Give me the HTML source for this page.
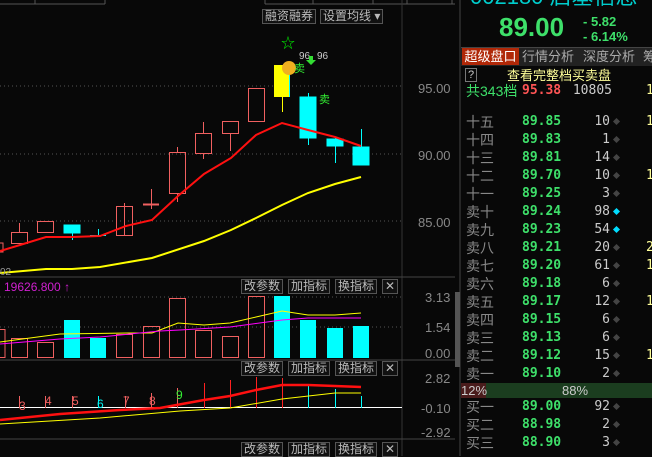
<!DOCTYPE html><html><head><meta charset="utf-8"><style>
body{margin:0;width:652px;height:456px;background:#080808;overflow:hidden;font-family:"Liberation Sans","Noto Sans CJK SC",sans-serif;position:relative}
.t{position:absolute;white-space:nowrap}
.btn{position:absolute;border:1px solid #555;color:#bbb;font-size:12px;line-height:13px;padding:0 2px;background:#111}
.row{position:absolute;left:466px;height:18px;font-size:14px;line-height:18px;width:190px}
.row .a{position:absolute;left:0;color:#888}
.row .b{position:absolute;left:56px;color:#3ee06a;font-family:"DejaVu Sans Mono","Liberation Mono",monospace;font-size:13px;font-weight:bold}
.row .c{position:absolute;right:46px;color:#ccc;font-family:"DejaVu Sans Mono",monospace;font-size:13px;text-align:right}
.row .d{position:absolute;left:148px;top:6px;width:5px;height:5px;background:#444;transform:rotate(45deg)}
.row .e{position:absolute;left:180px;color:#ffff99;font-family:"DejaVu Sans Mono",monospace;font-size:13px}
</style></head><body>
<svg width="652" height="456" style="position:absolute;left:0;top:0">
<g stroke="#555" fill="none"><path d="M0 4H105M35 0V4M105 0V4M265 0V4M265 4H455M313 0V4M373 0V4M407 0V4M452 0V4"/></g>
<line x1="402" y1="0" x2="402" y2="456" stroke="#333"/>
<line x1="460" y1="0" x2="460" y2="456" stroke="#444"/>
<line x1="0" y1="277" x2="455" y2="277" stroke="#444"/>
<line x1="0" y1="360" x2="455" y2="360" stroke="#444"/>
<line x1="0" y1="439" x2="455" y2="439" stroke="#444"/>
<g stroke="#555" stroke-dasharray="1,3"><line x1="0" y1="86" x2="402" y2="86"/><line x1="0" y1="154" x2="402" y2="154"/><line x1="0" y1="221" x2="402" y2="221"/><line x1="0" y1="297" x2="402" y2="297"/><line x1="0" y1="327" x2="402" y2="327"/></g>
<g fill="none" stroke="#f06060" stroke-width="1">
<rect x="-5" y="243" width="8" height="9"/><rect x="11.5" y="232.5" width="16" height="11"/><line x1="19.5" y1="223" x2="19.5" y2="232"/>
<rect x="37.5" y="221.5" width="16" height="11"/>
<rect x="116.5" y="206.5" width="16" height="29"/><line x1="124.5" y1="203" x2="124.5" y2="236"/>
<line x1="151.5" y1="189" x2="151.5" y2="209"/><line x1="143" y1="204.5" x2="159" y2="204.5" stroke-width="2"/>
<rect x="169.5" y="152.5" width="16" height="41"/><line x1="177.5" y1="147" x2="177.5" y2="152"/><line x1="177.5" y1="194" x2="177.5" y2="202"/>
<rect x="195.5" y="133.5" width="16" height="20"/><line x1="203.5" y1="122" x2="203.5" y2="133"/><line x1="203.5" y1="154" x2="203.5" y2="159"/>
<rect x="222.5" y="121.5" width="16" height="12"/><line x1="230.5" y1="134" x2="230.5" y2="151"/>
<rect x="248.5" y="88.5" width="16" height="33"/>
</g>
<g fill="#00ffff" stroke="#00ffff">
<rect x="64" y="225" width="16" height="8"/><line x1="72.5" y1="233" x2="72.5" y2="240"/>
<line x1="90" y1="235.5" x2="106" y2="235.5"/><line x1="98.5" y1="229" x2="98.5" y2="237"/>
<rect x="300" y="97" width="16" height="41"/><line x1="308.5" y1="93" x2="308.5" y2="145"/>
<rect x="327" y="139" width="16" height="7"/><line x1="335.5" y1="137" x2="335.5" y2="163"/>
<rect x="353" y="147" width="16" height="18"/><line x1="361.5" y1="129" x2="361.5" y2="147"/>
</g>
<rect x="274" y="65" width="16" height="32" fill="#ffff00"/><line x1="282.5" y1="97" x2="282.5" y2="112" stroke="#ffff00"/><line x1="289.5" y1="65" x2="289.5" y2="97" stroke="#00ffff"/>
<polyline fill="none" stroke="#ff1010" stroke-width="2" points="0,251 20,245 46,237 72,237 100,236 126,226 152,220 178,196 204,174 231,158 256,135 282,123 308,130 335,137 361,146"/>
<polyline fill="none" stroke="#ffff00" stroke-width="2" points="0,273 46,269 72,269 100,267 152,258 204,241 231,230 256,218 282,205 308,193 335,184 361,177"/>
<text x="281" y="48" fill="#00ee00" font-size="14">☆</text>
<circle cx="289" cy="68" r="7" fill="#f0b020"/>
<text x="299" y="59" fill="#ccc" font-size="10">96</text><text x="317" y="59" fill="#ccc" font-size="10">96</text>
<path d="M309 56h4v4h3l-5 5-5-5h3z" fill="#33dd33"/>
<text x="294" y="72" fill="#33ee33" font-size="11">卖</text>
<text x="319" y="103" fill="#33ee33" font-size="11">卖</text>
<text x="0" y="275" fill="#999" font-size="10">02</text>
<g fill="#888" font-size="13"><text x="418" y="93">95.00</text><text x="418" y="160">90.00</text><text x="418" y="227">85.00</text>
<text x="425" y="302">3.13</text><text x="425" y="332">1.54</text><text x="425" y="358">0.00</text>
<text x="425" y="383">2.82</text><text x="421" y="413">-0.10</text><text x="421" y="437">-2.92</text></g>
<g fill="none" stroke="#f06060">
<rect x="-5" y="329.5" width="10" height="28"/><rect x="11.5" y="338.5" width="16" height="19"/><rect x="37.5" y="342.5" width="16" height="15"/>
<rect x="116.5" y="334.5" width="16" height="23"/><rect x="143.5" y="326.5" width="16" height="31"/><rect x="169.5" y="298.5" width="16" height="59"/>
<rect x="195.5" y="330.5" width="16" height="27"/><rect x="222.5" y="336.5" width="16" height="21"/><rect x="248.5" y="296.5" width="16" height="61"/></g>
<g fill="#00ffff"><rect x="64" y="320" width="16" height="38"/><rect x="90" y="338" width="16" height="20"/><rect x="274" y="296" width="16" height="62"/><rect x="300" y="320" width="16" height="38"/><rect x="327" y="328" width="16" height="30"/><rect x="353" y="326" width="16" height="32"/></g>
<polyline fill="none" stroke="#ffff00" points="0,342 60,334 130,333 152,333 178,323 204,325 230,323 256,317 282,311 308,315 335,315 361,313"/>
<polyline fill="none" stroke="#ff00ff" points="0,344 60,339 100,337 160,331 180,330 230,327 282,320 308,318 361,318"/>
<line x1="0" y1="407.5" x2="402" y2="407.5" stroke="#fff"/>
<g stroke="#ff2020"><line x1="204.5" y1="383" x2="204.5" y2="408"/><line x1="230.5" y1="380" x2="230.5" y2="408"/><line x1="256.5" y1="377" x2="256.5" y2="408"/><line x1="282.5" y1="378" x2="282.5" y2="408"/>
<path d="M19.5 396v12M45.5 396v12M72.5 396v12M125.5 396v12M151.5 393v14M177.5 388v20" stroke="#f06060"/></g>
<g stroke="#00ffff"><line x1="308.5" y1="385" x2="308.5" y2="408"/><line x1="335.5" y1="389" x2="335.5" y2="408"/><line x1="361.5" y1="396" x2="361.5" y2="408"/><line x1="98.5" y1="396" x2="98.5" y2="408"/></g>
<polyline fill="none" stroke="#ff1010" stroke-width="2.5" points="0,420 60,414 120,410 160,408 204,400 230,396 256,390 282,385 308,385 335,386 361,387"/>
<polyline fill="none" stroke="#ffff00" points="0,424 100,418 180,411 230,408 282,399 335,393 361,393"/>
<g fill="#f06060" font-size="12"><text x="19" y="410">3</text><text x="45" y="405">4</text><text x="72" y="405">5</text><text x="97" y="408" fill="#0ee">6</text><text x="123" y="405">7</text><text x="149" y="405">8</text></g>
<text x="176" y="399" fill="#33ee33" font-size="12">9</text>
<rect x="455" y="292" width="5" height="75" fill="#555"/>
</svg>
<div class="btn" style="left:262px;top:9px">融资融券</div>
<div class="btn" style="left:320px;top:9px">设置均线 ▾</div>
<div class="t" style="left:4px;top:280px;color:#d020d0;font-size:12px">19626.800 <span>↑</span></div>
<div class="btn" style="left:241px;top:279px">改参数</div><div class="btn" style="left:288px;top:279px">加指标</div><div class="btn" style="left:335px;top:279px">换指标</div><div class="btn" style="left:382px;top:279px">✕</div>
<div class="btn" style="left:241px;top:361px">改参数</div><div class="btn" style="left:288px;top:361px">加指标</div><div class="btn" style="left:335px;top:361px">换指标</div><div class="btn" style="left:382px;top:361px">✕</div>
<div class="btn" style="left:241px;top:442px">改参数</div><div class="btn" style="left:288px;top:442px">加指标</div><div class="btn" style="left:335px;top:442px">换指标</div><div class="btn" style="left:382px;top:442px">✕</div>
<div class="t" style="left:470px;top:-21px;color:#00cccc;font-size:22px">002180 启基信息</div>
<div class="t" style="left:499px;top:12px;color:#3ee06a;font-size:26px;font-weight:bold">89.00</div>
<div class="t" style="left:583px;top:14px;color:#3ee06a;font-size:13px;font-weight:bold">- 5.82</div>
<div class="t" style="left:583px;top:29px;color:#3ee06a;font-size:13px;font-weight:bold">- 6.14%</div>
<div class="t" style="left:461px;top:47px;width:191px;height:18px;background:#222;border-top:1px solid #444"></div>
<div class="t" style="left:462px;top:48px;width:57px;height:17px;background:#b02808;color:#fff;font-size:13px;line-height:17px;text-align:center">超级盘口</div>
<div class="t" style="left:522px;top:48px;color:#aaa;font-size:13px;line-height:17px">行情分析</div>
<div class="t" style="left:583px;top:48px;color:#aaa;font-size:13px;line-height:17px">深度分析</div>
<div class="t" style="left:643px;top:48px;color:#aaa;font-size:13px;line-height:17px">筹</div>
<div class="t" style="left:465px;top:68px;width:10px;height:12px;border:1px solid #777;color:#ccc;font-size:11px;line-height:12px;text-align:center">?</div>
<div class="t" style="left:507px;top:65px;color:#ffff99;font-size:13px">查看完整档买卖盘</div>
<div class="row" style="top:82px"><span class="a" style="color:#3ee06a">共343档</span><span class="b" style="color:#ff5555">95.38</span><span class="c" style="right:44px">10805</span><span class="e">1</span></div>
<div class="row" style="top:113px"><span class="a">十五</span><span class="b">89.85</span><span class="c">10</span><i class="d"></i><span class="e">1</span></div>
<div class="row" style="top:131px"><span class="a">十四</span><span class="b">89.83</span><span class="c">1</span><i class="d"></i></div>
<div class="row" style="top:149px"><span class="a">十三</span><span class="b">89.81</span><span class="c">14</span><i class="d"></i></div>
<div class="row" style="top:167px"><span class="a">十二</span><span class="b">89.70</span><span class="c">10</span><i class="d"></i><span class="e">1</span></div>
<div class="row" style="top:185px"><span class="a">十一</span><span class="b">89.25</span><span class="c">3</span><i class="d"></i></div>
<div class="row" style="top:203px"><span class="a">卖十</span><span class="b">89.24</span><span class="c">98</span><i class="d" style="background:#00ddff"></i></div>
<div class="row" style="top:221px"><span class="a">卖九</span><span class="b">89.23</span><span class="c">54</span><i class="d" style="background:#00ddff"></i></div>
<div class="row" style="top:239px"><span class="a">卖八</span><span class="b">89.21</span><span class="c">20</span><i class="d"></i><span class="e">2</span></div>
<div class="row" style="top:257px"><span class="a">卖七</span><span class="b">89.20</span><span class="c">61</span><i class="d"></i><span class="e">1</span></div>
<div class="row" style="top:275px"><span class="a">卖六</span><span class="b">89.18</span><span class="c">6</span><i class="d"></i></div>
<div class="row" style="top:293px"><span class="a">卖五</span><span class="b">89.17</span><span class="c">12</span><i class="d"></i><span class="e">1</span></div>
<div class="row" style="top:311px"><span class="a">卖四</span><span class="b">89.15</span><span class="c">6</span><i class="d"></i></div>
<div class="row" style="top:329px"><span class="a">卖三</span><span class="b">89.13</span><span class="c">6</span><i class="d"></i></div>
<div class="row" style="top:347px"><span class="a">卖二</span><span class="b">89.12</span><span class="c">15</span><i class="d"></i><span class="e">1</span></div>
<div class="row" style="top:365px"><span class="a">卖一</span><span class="b">89.10</span><span class="c">2</span><i class="d"></i></div>
<div class="t" style="left:461px;top:383px;width:191px;height:15px;background:#1b3d1f"></div>
<div class="t" style="left:461px;top:383px;width:25px;height:15px;background:#4a1c1c;color:#ccc;font-size:13px;line-height:15px">12%</div>
<div class="t" style="left:562px;top:383px;color:#ccc;font-size:13px;line-height:15px">88%</div>
<div class="row" style="top:398px"><span class="a">买一</span><span class="b">89.00</span><span class="c">92</span><i class="d"></i></div>
<div class="row" style="top:416px"><span class="a">买二</span><span class="b">88.98</span><span class="c">2</span><i class="d"></i></div>
<div class="row" style="top:434px"><span class="a">买三</span><span class="b">88.90</span><span class="c">3</span><i class="d"></i></div>
</body></html>
